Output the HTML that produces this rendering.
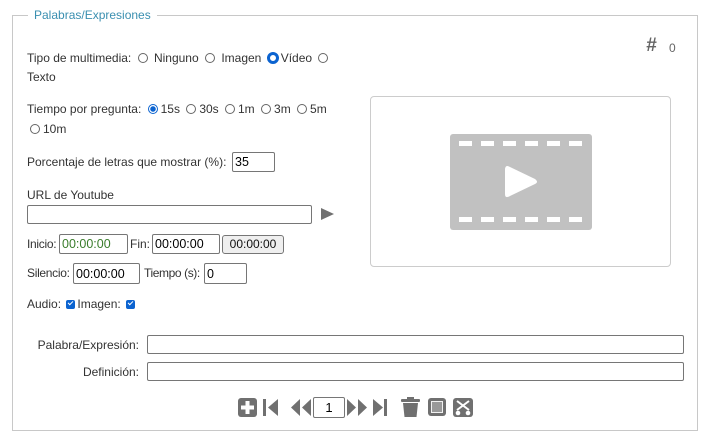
<!DOCTYPE html>
<html><head><meta charset="utf-8"><style>
body{margin:0;width:706px;height:437px;background:#fff;font-family:"Liberation Sans",sans-serif;font-size:12px;color:#333;position:relative;overflow:hidden}
.a{position:absolute;white-space:nowrap;line-height:16px}
.fs{position:absolute;left:12px;top:15px;width:684px;height:414px;border:1px solid #c8c8c8}
.lg{position:absolute;left:28px;top:7px;background:#fff;padding:0 6px;color:#3a8fb0;font-size:12px;line-height:16px}
input{position:absolute;box-sizing:border-box;border:1px solid #767676;border-radius:2px;font:12.5px "Liberation Sans",sans-serif;padding:0 2px;background:#fff;margin:0}
.r{display:inline-block;width:8px;height:8px;border:1px solid #666;border-radius:50%;vertical-align:-1px;margin:0 3px}
.rc{display:inline-block;width:6px;height:6px;border:3px solid #0b63d0;border-radius:50%;vertical-align:-2px;margin:0 2px;background:#fff}
.rs{display:inline-block;width:8px;height:8px;border:1px solid #0b63d0;border-radius:50%;vertical-align:-1px;margin:0 3px;background:radial-gradient(#0b63d0 2.5px,#fff 3px)}
.cb{display:inline-block;width:9px;height:9px;background:#0b63d0;border-radius:2px;vertical-align:-1px;margin:0 2px;position:relative}
.cb:after{content:"";position:absolute;left:2px;top:1px;width:4px;height:2px;border-left:1.5px solid #fff;border-bottom:1.5px solid #fff;transform:rotate(-45deg)}
</style></head><body>
<div class="fs"></div>
<div class="a lg" style="left:28px;top:7px">Palabras/Expresiones</div>
<div class="a" style="left:27px;top:50px">Tipo de multimedia: <span class="r"></span> Ninguno <span class="r"></span> Imagen <span class="rc"></span>Vídeo <span class="r"></span></div>
<div class="a" style="left:27px;top:69px">Texto</div>
<div class="a" style="left:646px;top:38px;font-size:19px;font-weight:bold;font-style:italic;color:#666">#</div>
<div class="a" style="left:669px;top:40px;color:#666">0</div>
<div class="a" style="left:27px;top:101px">Tiempo por pregunta: <span class="rs"></span>15s <span class="r"></span>30s <span class="r"></span>1m <span class="r"></span>3m <span class="r"></span>5m</div>
<div class="a" style="left:27px;top:121px"><span class="r"></span>10m</div>
<div class="a" style="left:27px;top:154px">Porcentaje de letras que mostrar (%):</div>
<input style="left:232px;top:152px;width:43px;height:20px" value="35">
<div class="a" style="left:27px;top:187px">URL de Youtube</div>
<input style="left:27px;top:205px;width:285px;height:19px">
<svg class="a" style="left:320px;top:207px" width="16" height="14"><path d="M1 1L14 7L1 13Z" fill="#707070"/></svg>
<div class="a" style="left:27px;top:236px;letter-spacing:-.3px">Inicio:</div>
<input style="left:59px;top:234px;width:69px;height:20px;color:#3a7d2c" value="00:00:00">
<div class="a" style="left:130px;top:236px">Fin:</div>
<input style="left:152px;top:234px;width:68px;height:20px" value="00:00:00">
<div class="a" style="left:222px;top:235px;width:62px;height:19px;box-sizing:border-box;border:1px solid #767676;border-radius:3px;background:#efefef;text-align:center;line-height:17px;color:#111">00:00:00</div>
<div class="a" style="left:27px;top:265px;letter-spacing:-.3px">Silencio:</div>
<input style="left:73px;top:263px;width:67px;height:21px" value="00:00:00">
<div class="a" style="left:144px;top:265px;letter-spacing:-.4px">Tiempo (s):</div>
<input style="left:204px;top:263px;width:43px;height:21px" value="0">
<div class="a" style="left:27px;top:296px">Audio: <span class="cb"></span>Imagen: <span class="cb"></span></div>
<div style="position:absolute;left:370px;top:96px;width:301px;height:171px;border:1px solid #ccc;border-radius:4px;box-sizing:border-box"></div>
<svg style="position:absolute;left:450px;top:134px" width="142" height="96">
<rect width="142" height="96" rx="3" fill="#c1c1c1"/>
<g fill="#fff"><rect x="9" y="7" width="13" height="5"/><rect x="31" y="7" width="13" height="5"/><rect x="53" y="7" width="13" height="5"/><rect x="75" y="7" width="13" height="5"/><rect x="97" y="7" width="13" height="5"/><rect x="119" y="7" width="13" height="5"/>
<rect x="9" y="83" width="13" height="5"/><rect x="31" y="83" width="13" height="5"/><rect x="53" y="83" width="13" height="5"/><rect x="75" y="83" width="13" height="5"/><rect x="97" y="83" width="13" height="5"/><rect x="119" y="83" width="13" height="5"/>
<path d="M55 36Q55 30 60 33L85 45Q89 48 85 50L60 62Q55 65 55 60Z"/></g></svg>
<div class="a" style="left:0;top:337px;width:139px;text-align:right">Palabra/Expresión:</div>
<input style="left:147px;top:335px;width:537px;height:19px">
<div class="a" style="left:0;top:364px;width:139px;text-align:right">Definición:</div>
<input style="left:147px;top:362px;width:537px;height:19px">
<svg style="position:absolute;left:236px;top:396px" width="240" height="22" fill="#707070">
<rect x="2" y="2" width="19" height="19" rx="3"/><path d="M9.5 5h4v4.5h4.5v4h-4.5v4.5h-4v-4.5h-4.5v-4h4.5z" fill="#fff"/>
<rect x="27" y="3" width="3" height="17"/><path d="M42 3v17l-10-8.5z"/>
<path d="M64 3v17l-9-8.5zM75 3v17l-9-8.5z"/>
<path d="M111 3v17l9-8.5zM122 3v17l9-8.5z"/>
<path d="M137 3v17l10-8.5z"/><rect x="148" y="3" width="3" height="17"/>
<rect x="165" y="3" width="19" height="3" rx="1"/><path d="M167 7h15l-1.5 14h-12z"/><rect x="171" y="1" width="7" height="3"/>
<rect x="192" y="2" width="18" height="18" rx="3"/><rect x="195" y="5" width="12" height="12" fill="#fff" opacity=".9"/><rect x="196" y="6" width="10" height="10" fill="#999"/>
<rect x="217" y="2" width="20" height="19" rx="3"/><path d="M221 5l12 9M233 5l-12 9" stroke="#fff" stroke-width="2"/><circle cx="222" cy="17" r="2.3" fill="#fff"/><circle cx="232" cy="17" r="2.3" fill="#fff"/>
</svg>
<input style="left:313px;top:397px;width:32px;height:21px;text-align:center;font-size:13px" value="1">
</body></html>
